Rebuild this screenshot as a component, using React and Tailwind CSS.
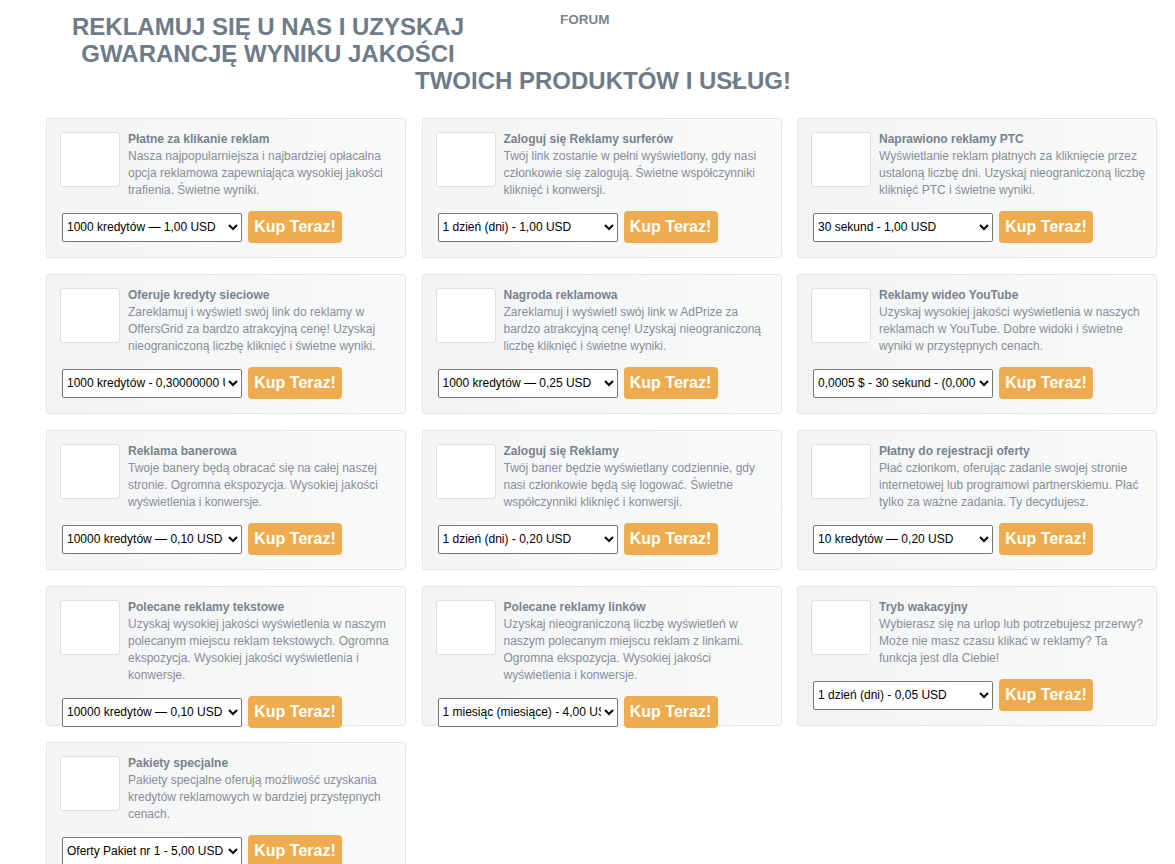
const offers = [
  {
    title: "Płatne za klikanie reklam",
    text: "Nasza najpopularniejsza i najbardziej opłacalna opcja reklamowa zapewniająca wysokiej jakości trafienia. Świetne wyniki.",
    option: "1000 kredytów — 1,00 USD",
  },
  {
    title: "Zaloguj się Reklamy surferów",
    text: "Twój link zostanie w pełni wyświetlony, gdy nasi członkowie się zalogują. Świetne współczynniki kliknięć i konwersji.",
    option: "1 dzień (dni) - 1,00 USD",
  },
  {
    title: "Naprawiono reklamy PTC",
    text: "Wyświetlanie reklam płatnych za kliknięcie przez ustaloną liczbę dni. Uzyskaj nieograniczoną liczbę kliknięć PTC i świetne wyniki.",
    option: "30 sekund - 1,00 USD",
  },
  {
    title: "Oferuje kredyty sieciowe",
    text: "Zareklamuj i wyświetl swój link do reklamy w OffersGrid za bardzo atrakcyjną cenę! Uzyskaj nieograniczoną liczbę kliknięć i świetne wyniki.",
    option: "1000 kredytów - 0,30000000 USD",
  },
  {
    title: "Nagroda reklamowa",
    text: "Zareklamuj i wyświetl swój link w AdPrize za bardzo atrakcyjną cenę! Uzyskaj nieograniczoną liczbę kliknięć i świetne wyniki.",
    option: "1000 kredytów — 0,25 USD",
  },
  {
    title: "Reklamy wideo YouTube",
    text: "Uzyskaj wysokiej jakości wyświetlenia w naszych reklamach w YouTube. Dobre widoki i świetne wyniki w przystępnych cenach.",
    option: "0,0005 $ - 30 sekund - (0,0005 USD)",
  },
  {
    title: "Reklama banerowa",
    text: "Twoje banery będą obracać się na całej naszej stronie. Ogromna ekspozycja. Wysokiej jakości wyświetlenia i konwersje.",
    option: "10000 kredytów — 0,10 USD",
  },
  {
    title: "Zaloguj się Reklamy",
    text: "Twój baner będzie wyświetlany codziennie, gdy nasi członkowie będą się logować. Świetne współczynniki kliknięć i konwersji.",
    option: "1 dzień (dni) - 0,20 USD",
  },
  {
    title: "Płatny do rejestracji oferty",
    text: "Płać członkom, oferując zadanie swojej stronie internetowej lub programowi partnerskiemu. Płać tylko za ważne zadania. Ty decydujesz.",
    option: "10 kredytów — 0,20 USD",
  },
  {
    title: "Polecane reklamy tekstowe",
    text: "Uzyskaj wysokiej jakości wyświetlenia w naszym polecanym miejscu reklam tekstowych. Ogromna ekspozycja. Wysokiej jakości wyświetlenia i konwersje.",
    option: "10000 kredytów — 0,10 USD",
  },
  {
    title: "Polecane reklamy linków",
    text: "Uzyskaj nieograniczoną liczbę wyświetleń w naszym polecanym miejscu reklam z linkami. Ogromna ekspozycja. Wysokiej jakości wyświetlenia i konwersje.",
    option: "1 miesiąc (miesiące) - 4,00 USD",
  },
  {
    title: "Tryb wakacyjny",
    text: "Wybierasz się na urlop lub potrzebujesz przerwy? Może nie masz czasu klikać w reklamy? Ta funkcja jest dla Ciebie!",
    option: "1 dzień (dni) - 0,05 USD",
  },
  {
    title: "Pakiety specjalne",
    text: "Pakiety specjalne oferują możliwość uzyskania kredytów reklamowych w bardziej przystępnych cenach.",
    option: "Oferty Pakiet nr 1 - 5,00 USD",
  },
];

const OfferCard = ({ title, text, option }) => (
  <div className="h-[140px] rounded-[3px] border border-[#e4e7ea] bg-gradient-to-r from-[#f3f4f5] to-[#f8f9f9] pl-[13px] pr-[9px] pt-[12px]">
    <div className="flex gap-[8px]">
      <div className="mt-px h-[55px] w-[60px] shrink-0 rounded-[3px] border border-[#dde1e5] bg-white"></div>
      <div className="flex-1 text-[12px] leading-[17px]">
        <p className="font-bold text-[#78838e]">{title}</p>
        <p className="text-[#868f99]">{text}</p>
      </div>
    </div>
    <div className="mt-[12px] flex items-center gap-[6px] pl-[2px]">
      <select
        defaultValue={option}
        className="h-[29px] w-[180px] rounded-[2px] border border-[#767676] bg-white text-[12px] text-black"
      >
        <option>{option}</option>
      </select>
      <button className="h-[32px] w-[94px] rounded-[4px] bg-[#efac4e] text-[16px] font-bold text-white">
        Kup Teraz!
      </button>
    </div>
  </div>
);

export default function App() {
  return (
    <div className="min-h-screen bg-white pb-10 font-['Liberation_Sans',Arial,sans-serif]">
      {/* Header */}
      <div className="flex pt-[13px]">
        <h1 className="ml-[48px] w-[440px] text-center text-[24px] font-bold leading-[27px] text-[#6e7b88]">
          REKLAMUJ SIĘ U NAS I UZYSKAJ
          <br />
          GWARANCJĘ WYNIKU JAKOŚCI
        </h1>
        <a className="ml-[72px] -mt-[2px] text-[13.5px] font-bold leading-[17px] text-[#7a8591]">
          FORUM
        </a>
      </div>
      <div className="ml-[383px] w-[440px] text-center text-[24px] font-bold leading-[27px] text-[#6e7b88]">
        TWOICH PRODUKTÓW I USŁUG!
      </div>

      {/* Offers */}
      <div className="ml-[46px] mt-[24px] grid w-[1111px] grid-cols-3 gap-x-[15.5px] gap-y-[16px]">
        {offers.map((o) => (
          <OfferCard key={o.title} {...o} />
        ))}
      </div>
    </div>
  );
}
